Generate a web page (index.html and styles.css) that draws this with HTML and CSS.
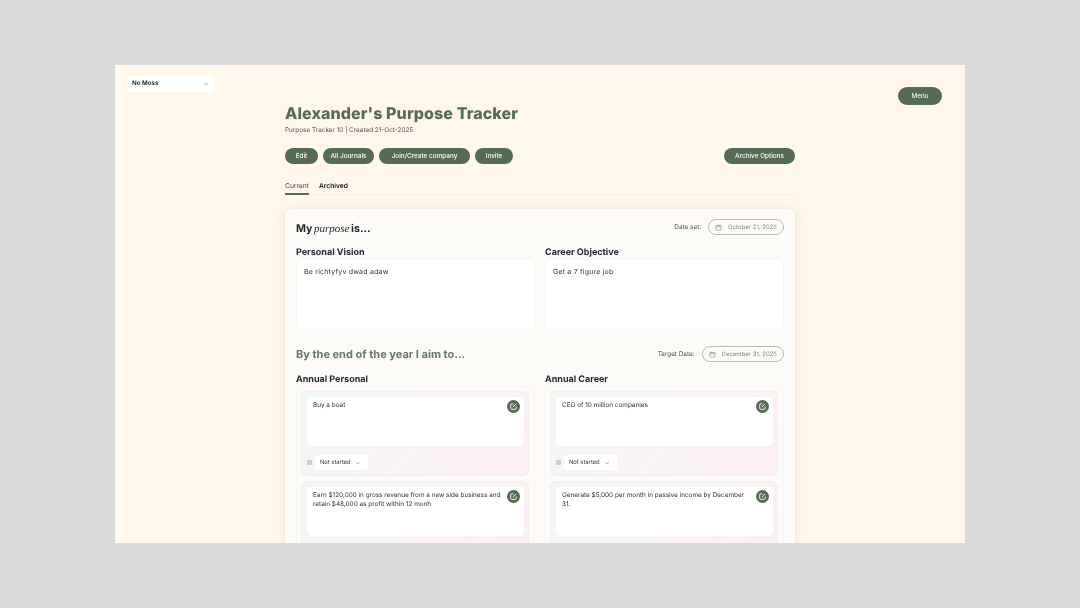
FILE: index.html
```html
<!DOCTYPE html>
<html lang="en">
<head>
  <meta charset="utf-8">
  <title>Purpose Tracker</title>
  <link rel="stylesheet" href="styles.css">
</head>
<body>
<div class="frame">
  <div class="side-left">
    <div class="org-select">
      <span>No Moss</span>
      <svg class="chev" viewBox="0 0 10 6"><path d="M1.5 1.5 5 4.5l3.5-3"/></svg>
    </div>
  </div>

  <div class="main">
    <h1 class="title">Alexander's Purpose Tracker</h1>
    <p class="subtitle">Purpose Tracker 10 | Created 21-Oct-2025</p>

    <div class="actions">
      <button class="btn btn-edit">Edit</button>
      <button class="btn btn-journals">All Journals</button>
      <button class="btn btn-join">Join/Create company</button>
      <button class="btn btn-invite">Invite</button>
      <button class="btn btn-end">Archive Options</button>
    </div>

    <div class="tabs">
      <span class="tab tab-active">Current</span>
      <span class="tab">Archived</span>
    </div>

    <div class="card">
      <div class="card-head">
        <h2 class="purpose">My <em>purpose</em> is...</h2>
        <div class="date-field">
          <span class="date-label">Date set:</span>
          <span class="date-pill">
            <svg class="cal" viewBox="0 0 12 12"><rect x="1.5" y="2.5" width="9" height="8" rx="1.5"/><path d="M1.5 5h9M4 1.2v2.3M8 1.2v2.3"/></svg>
            October 21, 2025
          </span>
        </div>
      </div>

      <div class="two-col">
        <div>
          <h3 class="col-title">Personal Vision</h3>
          <div class="text-box">Be richtyfyv dwad adaw</div>
        </div>
        <div>
          <h3 class="col-title">Career Objective</h3>
          <div class="text-box">Get a 7 figure job</div>
        </div>
      </div>

      <div class="card-head year-head">
        <h2 class="year-title">By the end of the year I aim to...</h2>
        <div class="date-field">
          <span class="date-label">Target Date:</span>
          <span class="date-pill">
            <svg class="cal" viewBox="0 0 12 12"><rect x="1.5" y="2.5" width="9" height="8" rx="1.5"/><path d="M1.5 5h9M4 1.2v2.3M8 1.2v2.3"/></svg>
            December 31, 2025
          </span>
        </div>
      </div>

      <div class="two-col">
        <div>
          <h3 class="col-title">Annual Personal</h3>
          <div class="goal-list">
            <div class="goal">
              <div class="goal-text">
                <span>Buy a boat</span>
                <span class="edit"><svg viewBox="0 0 12 12"><path d="M6 2.5H3.2A.9.9 0 0 0 2.3 3.4v5.4a.9.9 0 0 0 .9.9h5.4a.9.9 0 0 0 .9-.9V6"/><path d="M5.2 6.8 9.5 2.5"/></svg></span>
              </div>
              <div class="goal-foot">
                <span class="handle"></span>
                <div class="status"><span>Not started</span><svg class="chev" viewBox="0 0 10 6"><path d="M1.5 1.5 5 4.5l3.5-3"/></svg></div>
              </div>
            </div>
            <div class="goal">
              <div class="goal-text">
                <span>Earn $120,000 in gross revenue from a new side business and retain $48,000 as profit within 12 monh</span>
                <span class="edit"><svg viewBox="0 0 12 12"><path d="M6 2.5H3.2A.9.9 0 0 0 2.3 3.4v5.4a.9.9 0 0 0 .9.9h5.4a.9.9 0 0 0 .9-.9V6"/><path d="M5.2 6.8 9.5 2.5"/></svg></span>
              </div>
            </div>
          </div>
        </div>
        <div>
          <h3 class="col-title">Annual Career</h3>
          <div class="goal-list">
            <div class="goal">
              <div class="goal-text">
                <span>CEO of 10 million companies</span>
                <span class="edit"><svg viewBox="0 0 12 12"><path d="M6 2.5H3.2A.9.9 0 0 0 2.3 3.4v5.4a.9.9 0 0 0 .9.9h5.4a.9.9 0 0 0 .9-.9V6"/><path d="M5.2 6.8 9.5 2.5"/></svg></span>
              </div>
              <div class="goal-foot">
                <span class="handle"></span>
                <div class="status"><span>Not started</span><svg class="chev" viewBox="0 0 10 6"><path d="M1.5 1.5 5 4.5l3.5-3"/></svg></div>
              </div>
            </div>
            <div class="goal">
              <div class="goal-text">
                <span>Generate $5,000 per month in passive income by December 31.</span>
                <span class="edit"><svg viewBox="0 0 12 12"><path d="M6 2.5H3.2A.9.9 0 0 0 2.3 3.4v5.4a.9.9 0 0 0 .9.9h5.4a.9.9 0 0 0 .9-.9V6"/><path d="M5.2 6.8 9.5 2.5"/></svg></span>
              </div>
            </div>
          </div>
        </div>
      </div>
    </div>
  </div>

  <div class="side-right">
    <button class="btn btn-menu">Menu</button>
  </div>
</div>
</body>
</html>
```

FILE: styles.css
```css
* {
  box-sizing: border-box;
}

html, body {
  height: 100%;
}

body {
  margin: 0;
  background: #d9d9d9;
  font-family: "Inter", "Liberation Sans", sans-serif;
  color: #222;
  overflow: hidden;
  text-rendering: geometricPrecision;
}

.frame {
  margin: 65px 115px 0;
  width: 850px;
  height: 478px;
  background: #fff7ec;
  overflow: hidden;
  display: grid;
  grid-template-columns: 170px 510px 170px;
  filter: blur(0.3px);
}

.side-left {
  padding: 11px 0 0 12px;
}

.org-select {
  width: 88px;
  height: 16px;
  background: #fff;
  border-radius: 3px;
  padding: 0 6px 1px 5px;
  display: flex;
  align-items: center;
  justify-content: space-between;
  font-size: 6.2px;
  font-weight: 600;
  color: #111;
}

.chev {
  flex: none;
  width: 6px;
  height: 4px;
  fill: none;
  stroke: #888;
  stroke-width: 1;
}

.side-right {
  padding: 22px 23px 0 0;
  display: flex;
  justify-content: flex-end;
  align-items: flex-start;
}

.main {
  padding-top: 37px;
}

.title {
  margin: 0;
  font-size: 16px;
  line-height: 22px;
  font-weight: 800;
  letter-spacing: 0.1px;
  color: #556b54;
}

.subtitle {
  margin: 2px 0 0;
  font-size: 6.4px;
  line-height: 8px;
  color: #555;
}

.actions {
  display: flex;
  gap: 5px;
  margin-top: 14px;
}

.btn {
  border: none;
  height: 16px;
  padding: 0;
  border-radius: 8px;
  background: #556b54;
  color: #fff;
  font-family: inherit;
  font-size: 6.4px;
  font-weight: 500;
  box-shadow: 0 0 2px rgba(255, 255, 255, 0.8);
}

.btn-edit {
  width: 33px;
}

.btn-journals {
  width: 51px;
}

.btn-join {
  width: 91px;
}

.btn-invite {
  width: 38px;
}

.btn-end {
  width: 71px;
  margin-left: auto;
}

.btn-menu {
  width: 44px;
  height: 18px;
  border-radius: 9px;
  font-weight: 400;
}

.tabs {
  display: flex;
  gap: 10px;
  margin-top: 18px;
  border-bottom: 1px solid #f8f0e3;
}

.tab {
  font-size: 6.7px;
  line-height: 8px;
  font-weight: 600;
  color: #111;
  padding: 0 0 3px;
}

.tab-active {
  font-weight: 400;
  color: #444;
  border-bottom: 2px solid #556b54;
  margin-bottom: -1px;
}

.card {
  margin-top: 14px;
  background: #fdfbf8;
  border-radius: 6px;
  padding: 10px 11px;
  box-shadow: 0 1px 8px rgba(120, 90, 50, 0.18);
  height: 400px;
}

.card-head {
  display: flex;
  justify-content: space-between;
  align-items: center;
  height: 16px;
}

.purpose {
  margin: 0;
  padding-top: 2px;
  font-size: 10.7px;
  font-weight: 700;
  color: #1f2230;
}

.purpose em {
  font-family: "Liberation Serif", serif;
  font-weight: 400;
  font-size: 11px;
  margin: 0 -1px;
}

.date-field {
  display: flex;
  align-items: center;
  gap: 7px;
}

.date-label {
  font-size: 6.4px;
  color: #555;
}

.date-pill {
  height: 16px;
  border: 1px solid #bbb;
  border-radius: 8px;
  padding: 0 6px;
  display: flex;
  align-items: center;
  gap: 6px;
  font-size: 6px;
  color: #888;
}

.cal {
  width: 7px;
  height: 7px;
  fill: none;
  stroke: #777;
  stroke-width: 0.9;
}

.two-col {
  display: grid;
  grid-template-columns: 239px 239px;
  gap: 10px;
}

.col-title {
  margin: 12px 0 0;
  font-size: 9px;
  line-height: 12px;
  font-weight: 700;
  color: #1f2230;
}

.text-box {
  height: 70px;
  background: #fff;
  border: 1px solid #f8f6f2;
  border-radius: 5px;
  padding: 7px;
  font-size: 7px;
  line-height: 10px;
  letter-spacing: 0.2px;
  color: #333;
}

.year-head {
  margin-top: 17px;
}

.year-title {
  margin: 0;
  font-size: 11px;
  font-weight: 700;
  color: #667a66;
}

.goal-list {
  border: 1px solid #f8f5f1;
  border-radius: 5px;
  padding: 4px 5px 4px 4px;
  display: flex;
  flex-direction: column;
  gap: 5px;
}

.goal {
  height: 85px;
  border-radius: 6px;
  padding: 5px 4px 5px 5px;
  background: linear-gradient(135deg, #f0f6f6 0%, #f9f3f7 50%, #fdeef2 100%);
  border: 1px solid #f9e9ee;
}

.goal-text {
  height: 49px;
  background: #fff;
  border-radius: 5px;
  padding: 4px 4px 4px 6px;
  display: flex;
  justify-content: space-between;
  align-items: flex-start;
  gap: 6px;
  font-size: 6.4px;
  line-height: 9px;
  color: #333;
}

.edit {
  flex: none;
  width: 13px;
  height: 13px;
  margin-top: -1px;
  border-radius: 50%;
  background: #556b54;
  display: flex;
  align-items: center;
  justify-content: center;
}

.edit svg {
  width: 9px;
  height: 9px;
  fill: none;
  stroke: #fff;
  stroke-width: 1.2;
}

.goal-foot {
  display: flex;
  align-items: center;
  gap: 3px;
  margin-top: 9px;
}

.handle {
  width: 5px;
  height: 5px;
  border-radius: 1px;
  background: #ccc;
}

.status {
  width: 53px;
  height: 15px;
  background: #fff;
  border-radius: 3px;
  padding: 0 5px;
  display: flex;
  align-items: center;
  gap: 4px;
  font-size: 5.8px;
  color: #333;
}
```
